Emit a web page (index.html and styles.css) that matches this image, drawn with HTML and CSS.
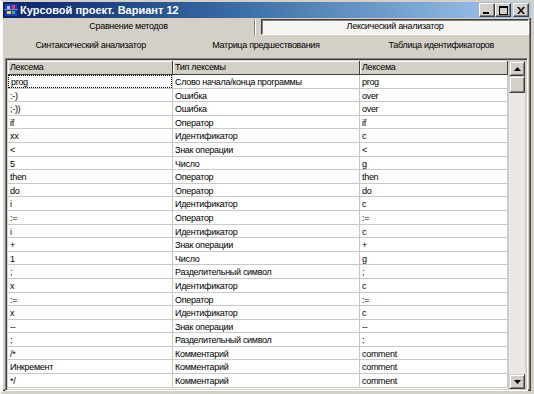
FILE: index.html
```html
<!DOCTYPE html>
<html lang="ru">
<head>
<meta charset="UTF-8">
<title>Курсовой проект. Вариант 12</title>
<link rel="stylesheet" href="styles.css">
</head>
<body>
<div class="window">
  <div class="titlebar">
    <svg class="app_icon" width="14" height="14" viewBox="0 0 14 14">
      <rect x="1" y="1" width="12" height="12" fill="#1f3bd0"/>
      <rect x="3" y="3" width="3" height="3" fill="#9fd0ff"/>
      <rect x="8" y="2" width="3" height="4" fill="#ff3030"/>
      <rect x="3" y="8" width="4" height="3" fill="#ffd020"/>
      <rect x="8" y="8" width="3" height="3" fill="#30c040"/>
      <rect x="0" y="6" width="14" height="1" fill="#5a8cff"/>
    </svg>
    <span class="title">Курсовой проект. Вариант 12</span>
    <div class="caption_buttons">
      <span class="cap_btn"><svg width="8" height="7" viewBox="0 0 8 7"><rect x="0" y="5" width="6" height="2" fill="#000"/></svg></span>
      <span class="cap_btn"><svg width="9" height="9" viewBox="0 0 9 9"><rect x="0.5" y="0.5" width="8" height="8" fill="none" stroke="#000"/><rect x="0" y="0" width="9" height="2" fill="#000"/></svg></span>
      <span class="cap_btn close"><svg width="8" height="7" viewBox="0 0 8 7"><path d="M0 0h2l2 2.5 2-2.5h2l-3 3.5 3 3.5h-2l-2-2.5-2 2.5h-2l3-3.5z" fill="#000"/></svg></span>
    </div>
  </div>

  <div class="tab_row first">
    <div class="tab">Сравнение методов</div>
    <div class="tab -on">Лексический анализатор</div>
  </div>
  <div class="tab_row second">
    <div class="tab">Синтаксический анализатор</div>
    <div class="tab">Матрица предшествования</div>
    <div class="tab">Таблица идентификаторов</div>
  </div>

  <div class="grid_box">
    <div class="grid">
      <div class="row head">
        <div class="cell">Лексема</div>
        <div class="cell">Тип лексемы</div>
        <div class="cell">Лексема</div>
      </div>
      <div class="row">
        <div class="cell"><span class="focus">prog</span></div>
        <div class="cell">Слово начала/конца программы</div>
        <div class="cell">prog</div>
      </div>
      <div class="row"><div class="cell">:-)</div><div class="cell">Ошибка</div><div class="cell">over</div></div>
      <div class="row"><div class="cell">;-))</div><div class="cell">Ошибка</div><div class="cell">over</div></div>
      <div class="row"><div class="cell">if</div><div class="cell">Оператор</div><div class="cell">if</div></div>
      <div class="row"><div class="cell">xx</div><div class="cell">Идентификатор</div><div class="cell">c</div></div>
      <div class="row"><div class="cell">&lt;</div><div class="cell">Знак операции</div><div class="cell">&lt;</div></div>
      <div class="row"><div class="cell">5</div><div class="cell">Число</div><div class="cell">g</div></div>
      <div class="row"><div class="cell">then</div><div class="cell">Оператор</div><div class="cell">then</div></div>
      <div class="row"><div class="cell">do</div><div class="cell">Оператор</div><div class="cell">do</div></div>
      <div class="row"><div class="cell">i</div><div class="cell">Идентификатор</div><div class="cell">c</div></div>
      <div class="row"><div class="cell">:=</div><div class="cell">Оператор</div><div class="cell">:=</div></div>
      <div class="row"><div class="cell">i</div><div class="cell">Идентификатор</div><div class="cell">c</div></div>
      <div class="row"><div class="cell">+</div><div class="cell">Знак операции</div><div class="cell">+</div></div>
      <div class="row"><div class="cell">1</div><div class="cell">Число</div><div class="cell">g</div></div>
      <div class="row"><div class="cell">;</div><div class="cell">Разделительный символ</div><div class="cell">;</div></div>
      <div class="row"><div class="cell">x</div><div class="cell">Идентификатор</div><div class="cell">c</div></div>
      <div class="row"><div class="cell">:=</div><div class="cell">Оператор</div><div class="cell">:=</div></div>
      <div class="row"><div class="cell">x</div><div class="cell">Идентификатор</div><div class="cell">c</div></div>
      <div class="row"><div class="cell">--</div><div class="cell">Знак операции</div><div class="cell">--</div></div>
      <div class="row"><div class="cell">;</div><div class="cell">Разделительный символ</div><div class="cell">;</div></div>
      <div class="row"><div class="cell">/*</div><div class="cell">Комментарий</div><div class="cell">comment</div></div>
      <div class="row"><div class="cell">Инкремент</div><div class="cell">Комментарий</div><div class="cell">comment</div></div>
      <div class="row"><div class="cell">*/</div><div class="cell">Комментарий</div><div class="cell">comment</div></div>
    </div>
    <div class="scrollbar">
      <div class="sb_btn"><svg width="7" height="4" viewBox="0 0 7 4"><path d="M3.5 0L7 4H0z" fill="#000"/></svg></div>
      <div class="sb_thumb"></div>
      <div class="sb_track"></div>
      <div class="sb_btn"><svg width="7" height="4" viewBox="0 0 7 4"><path d="M0 0h7L3.5 4z" fill="#000"/></svg></div>
    </div>
  </div>
</div>
</body>
</html>
```

FILE: styles.css
```css
*{
  box-sizing: border-box;
}
body{
  margin: 0;
  font-family: "Liberation Sans", Arial, sans-serif;
  font-size: 9px;
  letter-spacing: -0.3px;
  color: #000;
  background: #d4d0c8;
}
div.window{
  width: 534px;
  height: 394px;
  background: #d4d0c8;
  border: 3px solid #d4d0c8;
  border-top-width: 2px;
  border-left-color: #fff;
  box-shadow: inset -1px -1px 0 #404040, inset -2px -2px 0 #808080;
  display: flex;
  flex-direction: column;
}
div.titlebar{
  height: 16px;
  flex-shrink: 0;
  background: linear-gradient(to right, #0a246a, #3a6ea5 45%, #a6caf0);
  display: flex;
  align-items: center;
  padding-left: 1px;
}
.app_icon{
  flex-shrink: 0;
}
span.title{
  color: #fff;
  font-weight: bold;
  font-size: 11px;
  margin-left: 2px;
  letter-spacing: 0;
}
div.caption_buttons{
  margin-left: auto;
  display: flex;
  padding-right: 2px;
}
span.cap_btn{
  width: 16px;
  height: 14px;
  background: #d4d0c8;
  border: 1px solid;
  border-color: #fff #404040 #404040 #fff;
  box-shadow: inset -1px -1px 0 #808080;
  display: flex;
  align-items: center;
  justify-content: center;
}
span.cap_btn.close{
  margin-left: 2px;
}
div.tab_row{
  display: flex;
  flex-shrink: 0;
  padding-right: 2px;
}
div.tab_row.first{
  height: 16px;
  margin-top: 1px;
}
div.tab_row.second{
  height: 20px;
}
div.tab{
  flex: 1;
  display: flex;
  align-items: center;
  justify-content: center;
  white-space: nowrap;
}
div.tab_row.first div.tab{
  padding-bottom: 2px;
}
div.tab_row.first div.tab:first-child{
  flex: 0 0 252px;
  border-right: 1px solid #808080;
  box-shadow: 1px 0 0 #fff;
}
div.tab.-on{
  background: #f6f5f1;
  border: 1px solid;
  border-color: #404040 #fff #fff #404040;
  box-shadow: inset 1px 1px 0 #808080;
  margin-left: 6px;
}
div.grid_box{
  margin: 3px 3px 0 2px;
  flex: 1;
  display: flex;
  border: 1px solid;
  border-color: #808080 #fff #fff #808080;
  box-shadow: inset 1px 1px 0 #404040;
  padding: 2px 2px 1px 2px;
  background: #d4d0c8;
  overflow: hidden;
}
div.grid{
  flex: 1;
  background: #fff;
  overflow: hidden;
}
div.row{
  display: grid;
  grid-template-columns: 165px 187px 1fr;
  height: 13.6px;
}
div.row.head{
  height: 14px;
  background: #d4d0c8;
}
div.cell{
  border-right: 1px solid #c8c8c8;
  border-bottom: 1px solid #c8c8c8;
  padding-left: 2px;
  line-height: 14px;
  white-space: nowrap;
  overflow: hidden;
}
div.row.head div.cell{
  border-right: 1px solid #404040;
  border-bottom: 1px solid #404040;
  box-shadow: inset 1px 1px 0 #fff;
  line-height: 13px;
}
span.focus{
  display: block;
  margin-left: -2px;
  padding-left: 2px;
  height: 13px;
  line-height: 12px;
  border: 1px dotted #000;
}
div.scrollbar{
  width: 16px;
  flex-shrink: 0;
  display: flex;
  flex-direction: column;
  margin-left: 1px;
}
div.sb_btn{
  height: 15px;
  background: #d4d0c8;
  border: 1px solid;
  border-color: #d4d0c8 #404040 #404040 #d4d0c8;
  box-shadow: inset 1px 1px 0 #fff, inset -1px -1px 0 #808080;
  display: flex;
  align-items: center;
  justify-content: center;
}
div.sb_thumb{
  height: 17px;
  background: #d4d0c8;
  border: 1px solid;
  border-color: #d4d0c8 #404040 #404040 #d4d0c8;
  box-shadow: inset 1px 1px 0 #fff, inset -1px -1px 0 #808080;
}
div.sb_track{
  flex: 1;
  background: #eae8e3;
}
```
